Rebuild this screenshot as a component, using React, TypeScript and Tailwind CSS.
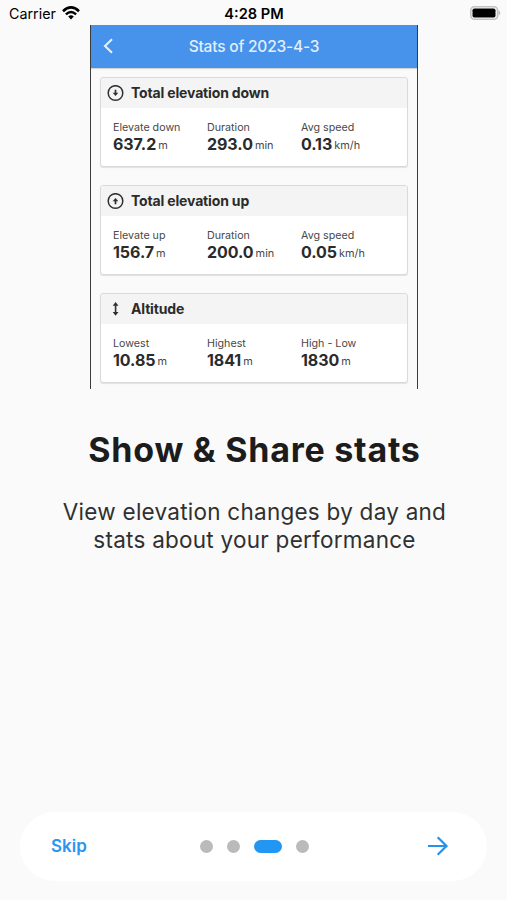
import type { ReactNode } from "react";

type Stat = { label: string; value: string; unit: string };

function CircleArrow({ up = false }: { up?: boolean }) {
  return (
    <svg className="size-[17px]" viewBox="0 0 17 17" fill="none" stroke="#303030" strokeWidth="1.5">
      <circle cx="8.5" cy="8" r="7.3" />
      <g transform={up ? "rotate(180 8.5 8)" : undefined}>
        <path d="M8.5 4.8v4" strokeWidth="1.7" />
        <path d="M5.7 7.8h5.6L8.5 11z" fill="#303030" stroke="none" />
      </g>
    </svg>
  );
}

function VerticalArrow() {
  return (
    <svg className="size-[17px]" viewBox="0 0 17 17" fill="none" stroke="#303030" strokeWidth="1.6">
      <path d="M8.6 3v9.6" />
      <path d="M5.7 4.8 8.6 1.1l2.9 3.7zM5.7 11.1l2.9 3.7 2.9-3.7z" fill="#303030" stroke="none" />
    </svg>
  );
}

function StatCard({ icon, title, stats }: { icon: ReactNode; title: string; stats: Stat[] }) {
  return (
    <section className="h-[90px] overflow-hidden rounded-[3px] border border-[#dadada] bg-white shadow-[0_1px_1px_rgba(0,0,0,0.1)]">
      <header className="flex h-[30px] items-center gap-[7px] bg-[#f4f4f4] pl-[6px]">
        {icon}
        <h2 className="text-[14px] leading-[18px] font-bold tracking-[-0.16px] text-[#2b2b2b]">{title}</h2>
      </header>
      <div className="grid grid-cols-[94px_94px_1fr] pt-[12px] pl-[12px]">
        {stats.map((s) => (
          <div key={s.label}>
            <div className="text-[10.7px] leading-[15px] text-[#484848]">{s.label}</div>
            <div className="flex items-start gap-[2px]">
              <span className="text-[16px] leading-[18px] font-bold tracking-[-0.05px] text-[#2b2b2b]">{s.value}</span>
              <span className="text-[10.9px] leading-[20px] text-[#484848]">{s.unit}</span>
            </div>
          </div>
        ))}
      </div>
    </section>
  );
}

function StatusBar() {
  return (
    <div className="grid h-[25px] grid-cols-3 items-center pt-[2px] pr-[6px] pl-[9px] text-black">
      <div className="flex items-center gap-[6px] text-[14.3px] leading-[18px]">
        Carrier
        <svg className="-mt-[2px] h-[14px] w-[18px]" viewBox="0 0 18 14">
          <path d="M1 5.2Q9-2.3 17 5.2" fill="none" stroke="#000" strokeWidth="2.6" />
          <path d="M3.9 8.3Q9 3.5 14.1 8.3" fill="none" stroke="#000" strokeWidth="2.4" />
          <path d="M6.2 10.5Q9 8 11.8 10.5L9 13.5z" />
        </svg>
      </div>
      <div className="-ml-[2px] text-center text-[14.6px] leading-[18px] font-semibold whitespace-nowrap">4:28 PM</div>
      <svg className="-mt-[2px] h-[14px] w-[31px] justify-self-end" viewBox="0 0 31 14">
        <rect x="0.8" y="0.8" width="26.8" height="12.4" rx="3.5" fill="#fafafa" stroke="#c2c2c2" strokeWidth="1.6" />
        <rect x="2.5" y="2.5" width="23" height="9" rx="1.8" />
        <path d="M28.6 4.3q3.4 2.7 0 5.4z" fill="#bdbdbd" />
      </svg>
    </div>
  );
}

export default function App() {
  return (
    <main className="flex h-[900px] w-[507px] flex-col bg-[#fafafa] font-['Inter',sans-serif]">
      <StatusBar />
      <div className="ml-[90px] h-[364px] w-[328px] border-x border-[#3c3c3c]">
        <div className="grid h-[43px] grid-cols-[40px_1fr_40px] items-center bg-[#4792eb] text-white shadow-[0_1px_1px_rgba(0,0,0,0.15)]">
          <svg className="-mt-[1px] ml-[11px] h-[16px] w-[12px]" viewBox="0 0 12 16" fill="none" stroke="#e6f0fc" strokeWidth="2.1">
            <path d="M10 1.2 3 8l7 6.8" />
          </svg>
          <h1 className="text-center text-[15.5px] leading-[20px] font-medium tracking-[-0.2px] text-[#e2eefc]">Stats of 2023-4-3</h1>
        </div>
        <div className="flex flex-col gap-[18px] px-[9px] pt-[9px]">
          <StatCard
            icon={<CircleArrow />}
            title="Total elevation down"
            stats={[
              { label: "Elevate down", value: "637.2", unit: "m" },
              { label: "Duration", value: "293.0", unit: "min" },
              { label: "Avg speed", value: "0.13", unit: "km/h" },
            ]}
          />
          <StatCard
            icon={<CircleArrow up />}
            title="Total elevation up"
            stats={[
              { label: "Elevate up", value: "156.7", unit: "m" },
              { label: "Duration", value: "200.0", unit: "min" },
              { label: "Avg speed", value: "0.05", unit: "km/h" },
            ]}
          />
          <StatCard
            icon={<VerticalArrow />}
            title="Altitude"
            stats={[
              { label: "Lowest", value: "10.85", unit: "m" },
              { label: "Highest", value: "1841", unit: "m" },
              { label: "High - Low", value: "1830", unit: "m" },
            ]}
          />
        </div>
      </div>
      <h1 className="mt-[41px] pl-[2px] text-center text-[34px] leading-[40px] font-bold tracking-[0.75px] text-[#1c1c1c]">
        Show &amp; Share stats
      </h1>
      <p className="mt-[28px] pl-[2px] text-center text-[22.5px] leading-[28px] tracking-[0.25px] text-[#303030]">
        View elevation changes by day and
        <br />
        stats about your performance
      </p>
      <nav className="mx-[20px] mt-auto mb-[19px] grid h-[69px] grid-cols-[1fr_auto_1fr] items-center rounded-full bg-white pr-[38px] pl-[31px]">
        <button className="-mt-[2px] justify-self-start text-[17px] leading-[22px] font-semibold text-[#2b96f0]">Skip</button>
        <div className="ml-[9px] flex items-center gap-[14px]">
          <span className="size-[13px] rounded-full bg-[#bababa]" />
          <span className="size-[13px] rounded-full bg-[#bababa]" />
          <span className="h-[13px] w-[28px] rounded-full bg-[#2196f3]" />
          <span className="size-[13px] rounded-full bg-[#bababa]" />
        </div>
        <svg className="-mt-[1px] h-[20px] w-[22px] justify-self-end" viewBox="0 0 22 20" fill="none" stroke="#2491ea" strokeWidth="2.2">
          <path d="M1 10h18.5M10.7 1.2l8.8 8.8-8.8 8.8" />
        </svg>
      </nav>
    </main>
  );
}
